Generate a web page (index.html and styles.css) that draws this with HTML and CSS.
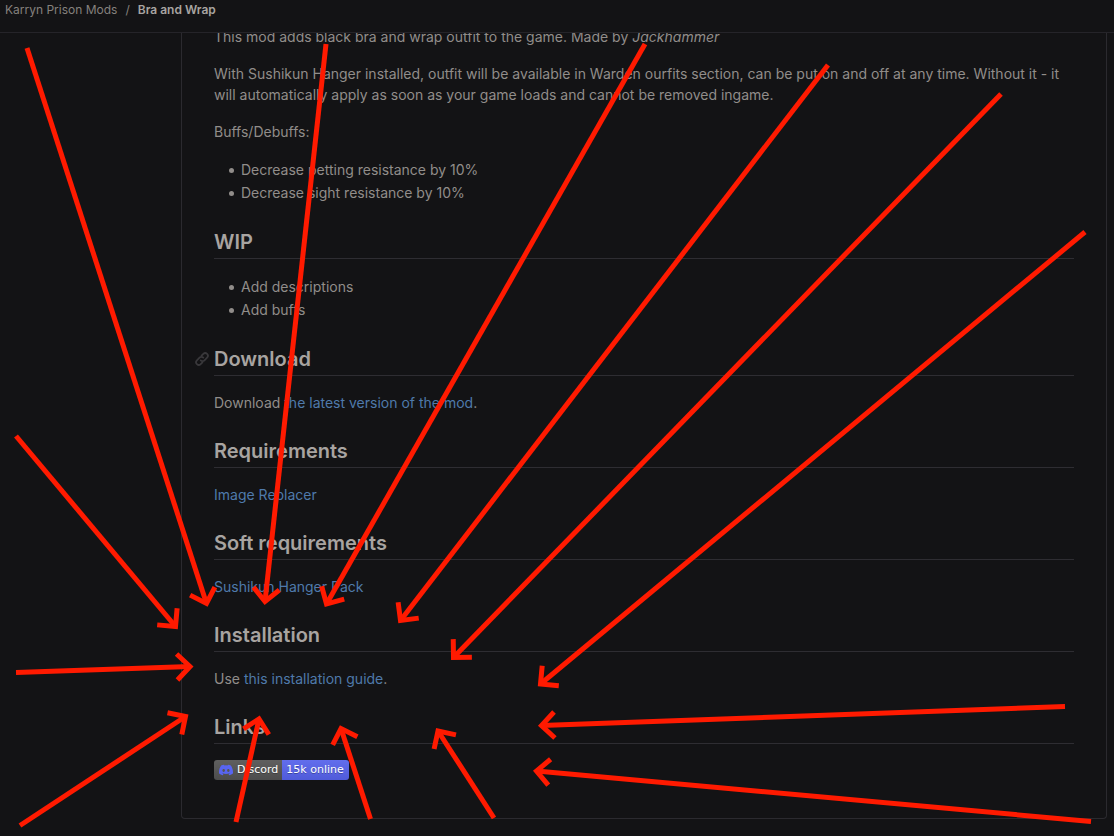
FILE: index.html
```html
<!DOCTYPE html>
<html lang="en">
<head>
  <meta charset="UTF-8" />
  <meta name="viewport" content="width=device-width, initial-scale=1.0"/>
  <title>Bra and Wrap</title>
  <link rel="stylesheet" href="styles.css">
</head>
<body>
  <header class="topbar">
    <nav class="breadcrumb">
      <a href="#">Karryn Prison Mods</a>
      <span>/</span>
      <a href="#" class="current">Bra and Wrap</a>
    </nav>
  </header>

  <main>
    <article class="readme">
      <p>This mod adds black bra and wrap outfit to the game. Made by <em>Jackhammer</em></p>
      <p>With Sushikun Hanger installed, outfit will be available in Warden ourfits section, can be put on and off at any time. Without it - it will automatically apply as soon as your game loads and cannot be removed ingame.</p>
      <p>Buffs/Debuffs:</p>
      <ul>
        <li>Decrease petting resistance by 10%</li>
        <li>Decrease sight resistance by 10%</li>
      </ul>

      <h2>WIP</h2>
      <ul>
        <li>Add descriptions</li>
        <li>Add buffs</li>
      </ul>

      <h2 id="download">
        <a class="anchor" href="#download" aria-label="Link to Download">
          <svg width="14" height="14" viewBox="0 0 16 16" fill="none" stroke="currentColor" stroke-width="2" stroke-linecap="round">
            <path d="M6.5 9.5a3 3 0 0 0 4.3 0l3-3a3 3 0 0 0-4.3-4.3L7.5 4.2"/>
            <path d="M9.5 6.5a3 3 0 0 0-4.3 0l-3 3a3 3 0 0 0 4.3 4.3L8.500 11.800"/>
          </svg>
        </a>Download
      </h2>
      <p>Download <a href="#">the latest version of the mod</a>.</p>

      <h2>Requirements</h2>
      <p><a href="#">Image Replacer</a></p>

      <h2>Soft requirements</h2>
      <p><a href="#">Sushikun Hanger Pack</a></p>

      <h2>Installation</h2>
      <p>Use <a href="#">this installation guide</a>.</p>

      <h2>Links</h2>
      <a class="badge" href="#">
        <span class="badge-label">
          <svg width="14" height="14" viewBox="0 0 24 24" fill="#5865f2">
            <path d="M20.317 4.37a19.790 19.790 0 0 0-4.885-1.515.074.074 0 0 0-.079.037c-.21.375-.444.864-.608 1.250a18.270 18.270 0 0 0-5.487 0 12.640 12.640 0 0 0-.617-1.250.077.077 0 0 0-.079-.037A19.736 19.736 0 0 0 3.677 4.370a.070.070 0 0 0-.032.027C.533 9.046-.320 13.580.099 18.057a.082.082 0 0 0 .031.057 19.900 19.900 0 0 0 5.993 3.030.078.078 0 0 0 .084-.028c.462-.630.874-1.295 1.226-1.994a.076.076 0 0 0-.041-.106 13.107 13.107 0 0 1-1.872-.892.077.077 0 0 1-.008-.128 10.200 10.200 0 0 0 .372-.292.074.074 0 0 1 .077-.010c3.928 1.793 8.180 1.793 12.062 0a.074.074 0 0 1 .078.010c.120.098.246.198.373.292a.077.077 0 0 1-.006.127 12.299 12.299 0 0 1-1.873.892.077.077 0 0 0-.041.107c.360.698.772 1.362 1.225 1.993a.076.076 0 0 0 .084.028 19.839 19.839 0 0 0 6.002-3.030.077.077 0 0 0 .032-.054c.500-5.177-.838-9.674-3.549-13.660a.061.061 0 0 0-.031-.030zM8.020 15.330c-1.183 0-2.157-1.085-2.157-2.419 0-1.333.956-2.419 2.157-2.419 1.210 0 2.176 1.096 2.157 2.420 0 1.333-.956 2.418-2.157 2.418zm7.975 0c-1.183 0-2.157-1.085-2.157-2.419 0-1.333.955-2.419 2.157-2.419 1.210 0 2.176 1.096 2.157 2.420 0 1.333-.946 2.418-2.157 2.418z"/>
          </svg>
          Discord
        </span>
        <span class="badge-value">15k online</span>
      </a>
    </article>
  </main>

  <!-- hand-drawn arrows pointing at the installation section -->
  <svg class="arrows" width="1114" height="836" viewBox="0 0 1114 836" aria-hidden="true">
    <defs>
      <marker id="head" markerUnits="userSpaceOnUse" markerWidth="40" markerHeight="40" orient="auto" overflow="visible">
        <path d="M-13 -13L0 0L-13 13"/>
      </marker>
    </defs>
    <path d="M27 48L206.500 603.500"/>
    <path d="M16 436L175.500 626.500"/>
    <path d="M16 672.500L190 666.500"/>
    <path d="M20 825.500L185.500 716.500"/>
    <path d="M326 44L265 601.500"/>
    <path d="M645 44L326.500 604"/>
    <path d="M828 65L400.500 620.500"/>
    <path d="M1001 94L453.500 657.500"/>
    <path d="M1085 232L540.500 684"/>
    <path d="M1065 706.500L541.500 725.500"/>
    <path d="M1091 821.500L536.500 771"/>
    <path d="M236 822L259 719"/>
    <path d="M370.500 819L341 728.500"/>
    <path d="M494 818L438 731"/>
  </svg>
</body>
</html>
```
FILE: styles.css
```css
* { box-sizing: border-box; }
body { margin: 0; height: 100vh; display: flex; flex-direction: column; overflow: hidden; position: relative; background: #131315; color: #918d8a; font: 14px/21px Inter, sans-serif; }
a { color: #4f7aab; text-decoration: none; }

.topbar { flex: none; height: 33px; padding: 0 5px; border-bottom: 1px solid #252429; }
.breadcrumb { display: flex; gap: 8px; font-size: 12px; line-height: 20px; color: #85817e; }
.breadcrumb a { color: #85817e; }
.breadcrumb .current { color: #a8a4a1; font-weight: 600; }

main { flex: 1; min-height: 0; overflow: hidden; padding: 0 7px 0 181px; }
/* scrolled slightly under the top bar */
.readme { margin-top: -7px; padding: 0 32px 38px; border: 1px solid #2b2a2f; border-top: 0; border-radius: 0 0 4px 4px; }
.readme p { margin: 0 0 16px; }
.readme ul { margin: 0 0 26px; padding: 1px 0 0 27px; list-style: none; }
.readme li { position: relative; }
.readme li + li { margin-top: 2px; }
.readme li::before { content: ""; position: absolute; left: -12px; top: 9px; width: 5px; height: 5px; border-radius: 50%; background: #918d8a; }
.readme h2 { position: relative; margin: 25px 0 16px; padding-bottom: 3px; border-bottom: 1px solid #2e2d32; color: #a8a4a1; font-size: 20px; line-height: 26px; font-weight: 600; }
.anchor { position: absolute; right: 100%; top: 0; margin-right: 5px; height: 26px; display: flex; align-items: center; color: #39383b; }

.badge { display: flex; width: fit-content; height: 20px; border-radius: 3px; overflow: hidden; color: #fff; font: 11px/20px "DejaVu Sans", sans-serif; text-shadow: 0 1px 0 rgba(1, 1, 1, 0.3); }
.badge span { display: flex; align-items: center; background-image: linear-gradient(rgba(187, 187, 187, 0.1), rgba(0, 0, 0, 0.1)); }
.badge-label { gap: 4px; padding: 0 4px 0 5px; background-color: #555; }
.badge-value { padding: 0 5px 0 4px; background-color: #5865f2; }

.arrows { position: absolute; top: 0; left: 0; pointer-events: none; fill: none; stroke: #ff1a00; stroke-width: 5; }
.arrows > path { marker-end: url(#head); }
```
